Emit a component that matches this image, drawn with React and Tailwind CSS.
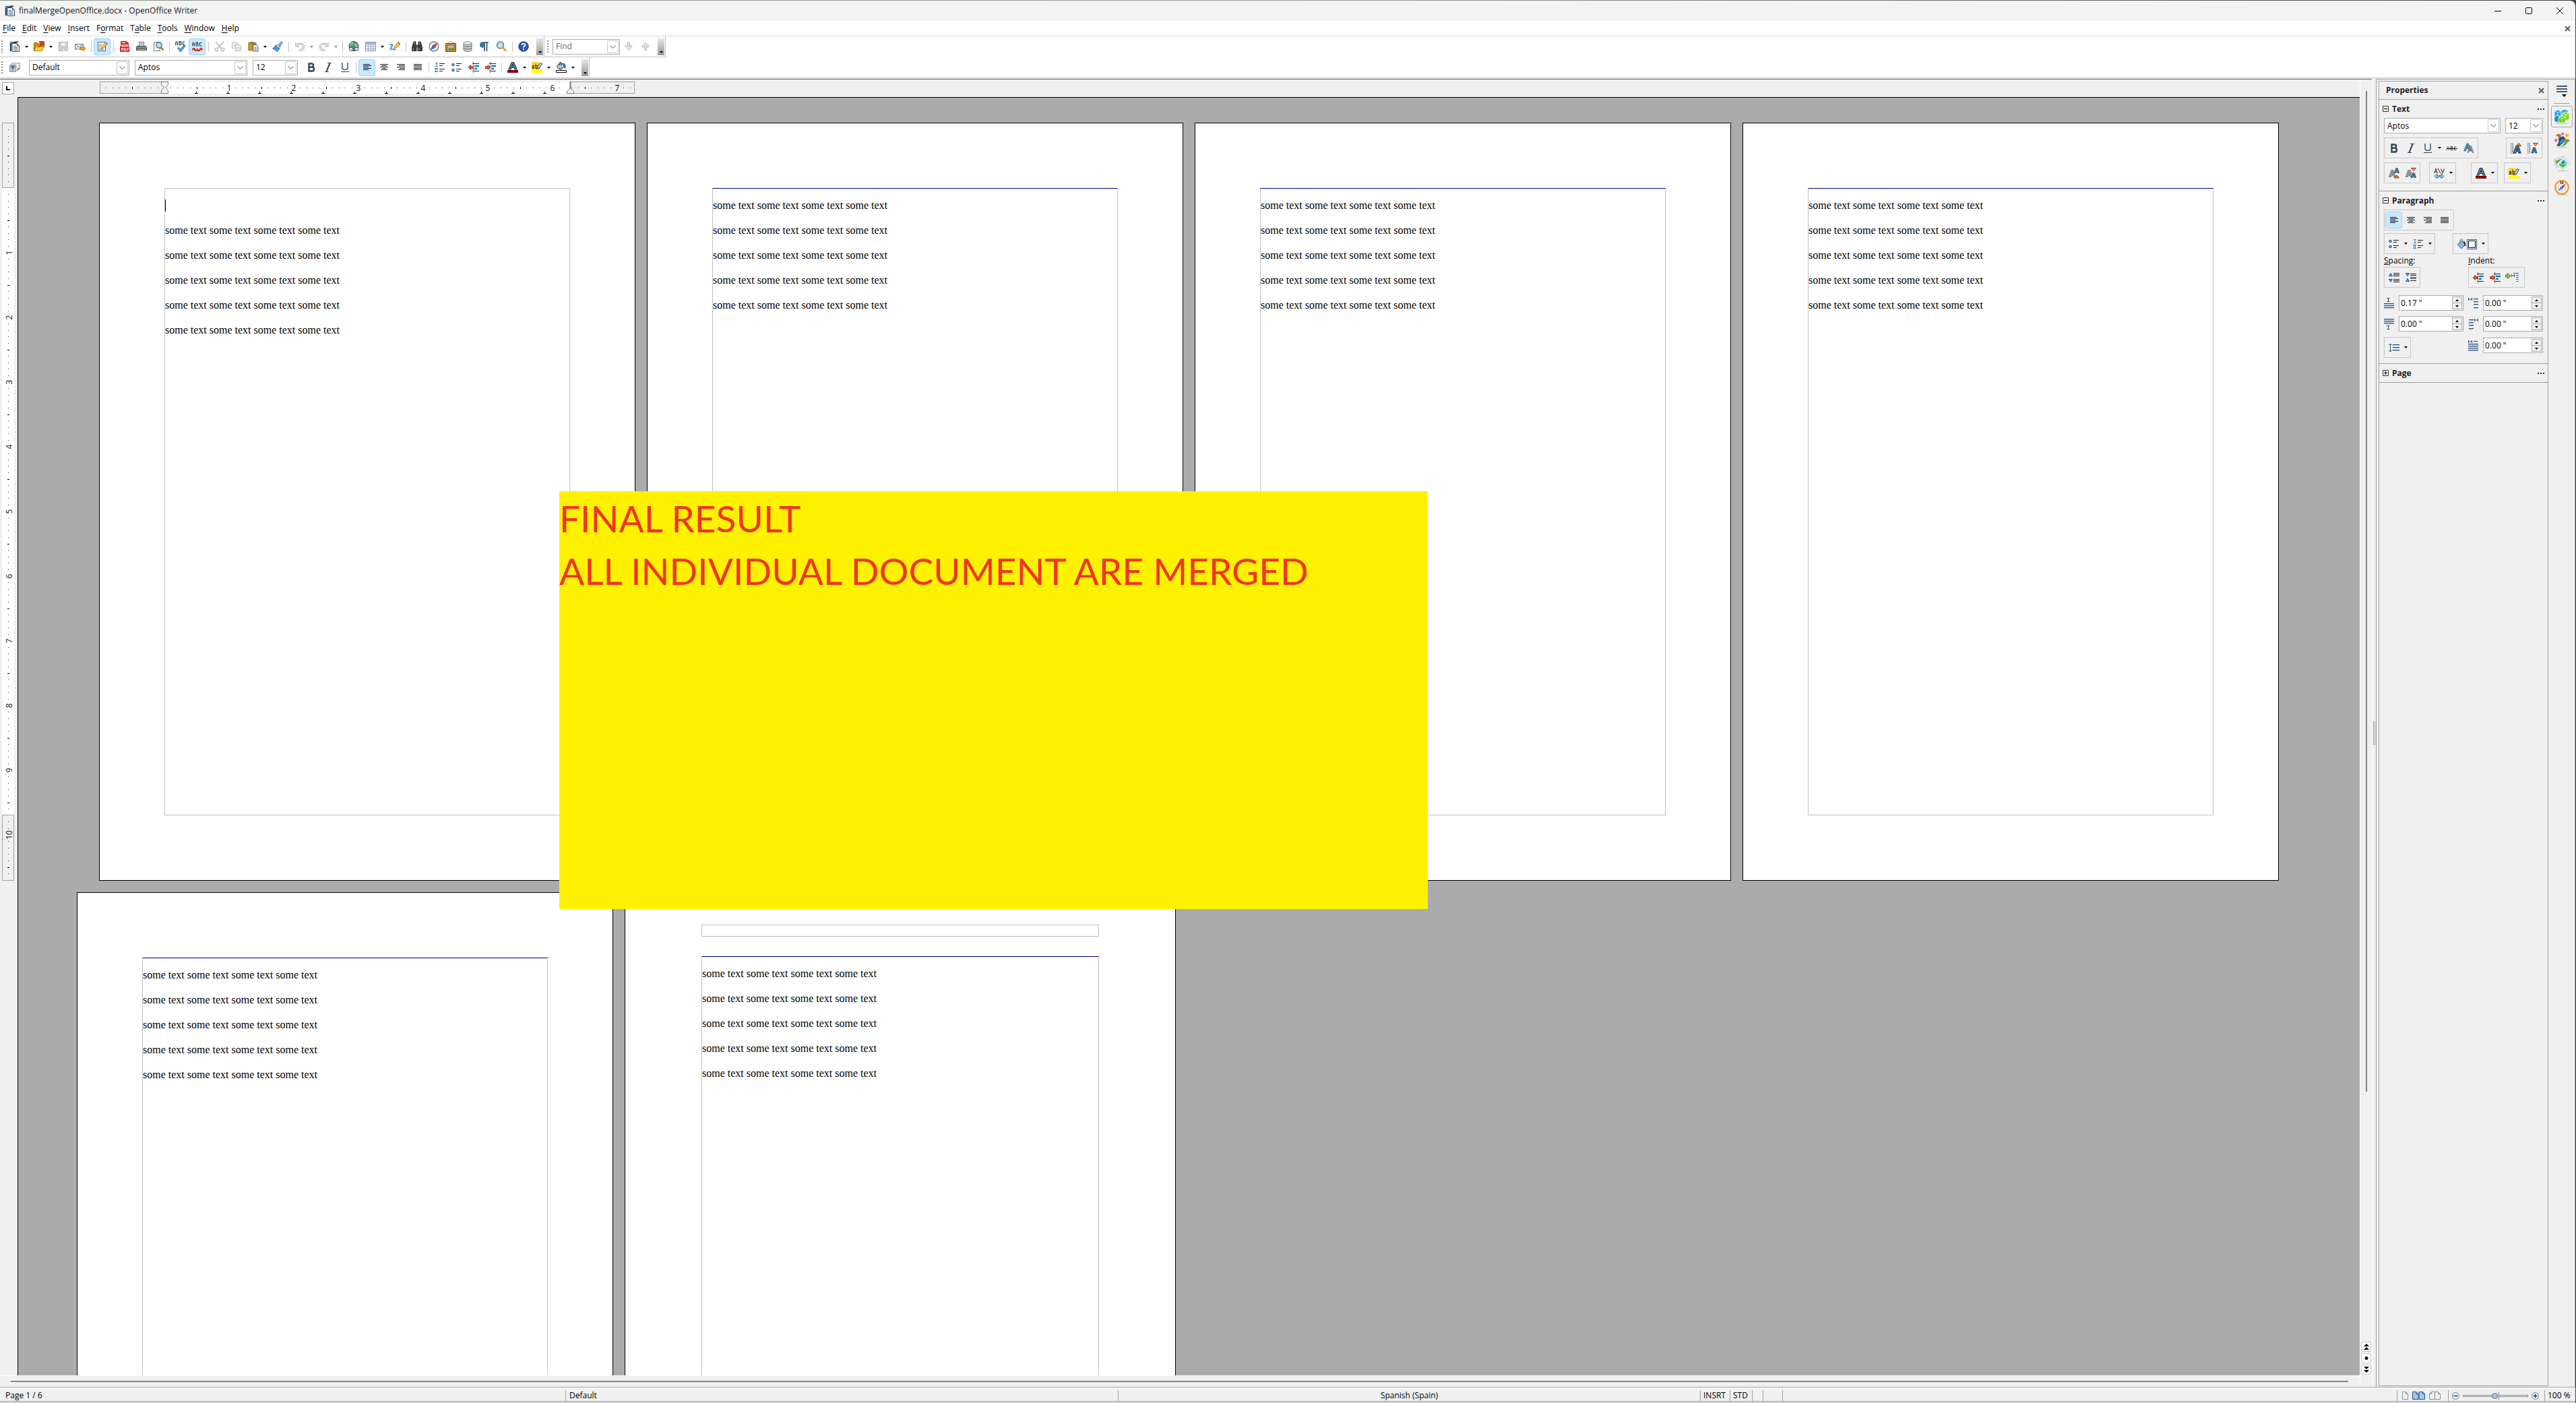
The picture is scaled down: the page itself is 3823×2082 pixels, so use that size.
import React from 'react';

/* ---------- icon drawings, 16 x 16 unless stated ---------- */

function Svg({ children, w = 16, h = 16 }) {
  return (
    <svg width={w} height={h} viewBox={`0 0 ${w} ${h}`} fill="none" aria-hidden="true" className="block shrink-0">
      {children}
    </svg>
  );
}

const WriterIcon = () => (
  <Svg>
    <path d="M4 3.500h7.500l3 3v9H4z" fill="#f4f8fa" stroke="#3a5263" />
    <path d="M6 7.500h4M6 9.500h6.500M6 11.500h6.500M6 13.500h6.500" stroke="#54748a" />
    <path d="M0 1.500c3-.5 4-1 6 0C8 .2 11 0 15 1 12 1.500 10.500 3 8.500 4 6.500 3 3 3 0 1.500z" fill="#2c4658" />
    <path d="M2 3v12" stroke="#2c4658" strokeWidth="2.500" />
    <path d="M11.500 4v3h3" stroke="#3a5263" />
  </Svg>
);

const OpenIcon = () => (
  <Svg>
    <path d="M.5 2.500h5l1.500 2h4v10H.5z" fill="#d98c0c" stroke="#a35f00" />
    <path d="M.8 14.500 3.500 8h12l-3 6.500z" fill="#ffd34d" stroke="#b87400" />
    <path d="M7.500 8.500 11 5 8.500 2.500V.5h7v7h-2L11.500 6 9 8.500z" fill="#d9441c" stroke="#8c2408" strokeWidth=".7" />
  </Svg>
);

const SaveIcon = () => (
  <Svg>
    <path d="M1.500 1.500h13v13h-13z" fill="#d2d2d2" stroke="#b4b4b4" />
    <path d="M4 2h8v6H4z" fill="#f2f2f2" stroke="#bdbdbd" />
    <path d="M5 10.500h6v4H5z" fill="#ececec" stroke="#b4b4b4" />
    <path d="M6.500 11.500v2" stroke="#aaa" />
  </Svg>
);

const MailIcon = () => (
  <Svg>
    <path d="M.5 4.500h12v7.500H.5z" fill="#eef2f5" stroke="#6f7f8b" />
    <path d="m.5 4.500 6 4.500 6-4.500M.5 12l4-4M12.500 12l-4-4" stroke="#6f7f8b" />
    <path d="M8 9.500h4V7l4 4-4 4v-2.500H8z" fill="#f5a623" stroke="#a35f00" strokeWidth=".8" />
  </Svg>
);

const EditIcon = () => (
  <Svg>
    <path d="M1.500 1.500h11v13h-11z" fill="#fafcfd" stroke="#4b6475" />
    <path d="M3 4.500h5M3 6.500h4M3 8.500h3M3 10.500h3M3 12.500h7" stroke="#7c98a9" />
    <path d="M6.500 11.500 7.500 8l5.500-6 2.500 2.500-6 6z" fill="#ffc93c" stroke="#8a5a10" strokeWidth=".8" />
    <path d="m12 3 1.500-1.500L16 4l-1.500 1.500z" fill="#e36a7c" />
    <path d="m6.500 11.500 1.300-.4-.9-.9z" fill="#222" />
  </Svg>
);

const PdfIcon = () => (
  <Svg>
    <path d="M2.500 .5h8l3 3v12h-11z" fill="#f4f8fa" stroke="#4b6475" />
    <path d="M2 0h9l3 3v2.500H2z" fill="#d33" />
    <path d="M4 2.500h5" stroke="#fff" />
    <path d="M4 6.500h8" stroke="#7c98a9" />
    <path d="M1 8h14v8H1z" fill="#e02020" />
    <path d="M3.500 14.500v-4h2v2h-2M7.500 10.500v4h1.500l.5-1v-2l-.5-1zM12 14.500v-4h2M12 12.500h1.500" stroke="#fff" />
  </Svg>
);

const PrintIcon = () => (
  <Svg>
    <path d="M4.500 1.500h7v6h-7z" fill="#f2f7fb" stroke="#4f6675" />
    <path d="M6 3.500h4M6 5.500h4" stroke="#88a" />
    <path d="M1.500 7.500h13l1 2v4H.5v-4z" fill="#8b959c" stroke="#2f3a42" />
    <path d="M2 10.500h12" stroke="#3f4a52" />
    <path d="M2.500 12.500h11" stroke="#7ec832" strokeWidth="1.500" />
  </Svg>
);

const PreviewIcon = () => (
  <Svg>
    <path d="M1.500 1.500h9v13h-9z" fill="#f6f8fa" stroke="#6f8290" />
    <circle cx="9" cy="6" r="4.200" fill="#b9dcf3" stroke="#3f6480" strokeWidth="1.200" />
    <path d="m12 9.500 3.500 4" stroke="#a6651b" strokeWidth="2.400" />
  </Svg>
);

const SpellIcon = () => (
  <Svg>
    <path d="M.5 6V2.500L2 .5l1.500 2V6M.5 4h3M6 5.500v-5h2.500v2H6h3v3zM14.500 1h-3v4.500h3" stroke="#35495a" strokeWidth="1.200" />
    <path d="m4 9.500 4 4.500 6.500-8" stroke="#1c5c94" strokeWidth="3" />
    <path d="m4 9.500 4 4.500 6.500-8" stroke="#6fb4ea" strokeWidth="1.200" />
  </Svg>
);

const AutoSpellIcon = () => (
  <Svg>
    <path d="M.5 7.500V4L2 2l1.500 2v3.500M.5 5.500h3M6 7V2h2.500v2H6h3v3zM14.500 2.500h-3V7h3" stroke="#35495a" strokeWidth="1.200" />
    <path d="M.5 13.500q2.500-5 4 0 2 1.500 3.500-1 1.500 2.500 3.500 1 1.500-5 4 0" stroke="#d8301c" strokeWidth="2.400" />
  </Svg>
);

const CutIcon = () => (
  <Svg>
    <path d="m2 1 9 10M14 1 5 11" stroke="#bdbdbd" strokeWidth="1.800" />
    <circle cx="3.500" cy="12.500" r="2.200" stroke="#bdbdbd" strokeWidth="1.400" />
    <circle cx="12.500" cy="12.500" r="2.200" stroke="#bdbdbd" strokeWidth="1.400" />
  </Svg>
);

const CopyIcon = () => (
  <Svg>
    <path d="M1.500 1.500h6l2 2v7h-8z" fill="#f3f3f3" stroke="#bdbdbd" />
    <path d="M6.500 5.500h6l2 2v7h-8z" fill="#f3f3f3" stroke="#b4b4b4" />
    <path d="M8 9.500h5M8 11.500h5M3 4.500h3M3 6.500h3" stroke="#c4c4c4" />
  </Svg>
);

const PasteIcon = () => (
  <Svg>
    <path d="M1 2.500h11v11H1z" fill="#d39a17" stroke="#8f5f05" />
    <path d="M4 1h5v3H4z" fill="#6b7780" />
    <path d="M7.500 5.500h5l2.500 2.500v7H7.500z" fill="#f1f6fa" stroke="#3f5b70" />
    <path d="M9 9.500h4M9 11.500h4M9 13h4" stroke="#6f8ea3" />
  </Svg>
);

const BrushIcon = () => (
  <Svg>
    <path d="m9.500 6 4-5.500 2 2-4 5.500z" fill="#9fc4e4" stroke="#3b6386" />
    <path d="M6.500 4.500 12 9l-1.500 2L5 6.500z" fill="#e9eef2" stroke="#4a6c88" strokeWidth=".8" />
    <path d="M5 6.500 10.500 11 7.500 15.500.5 10.500c2 0 3.500-2 4.500-4z" fill="#4d9fe4" stroke="#1c5c9a" />
  </Svg>
);

const UndoIcon = () => (
  <Svg>
    <path d="M1.500 2v6h6L5.500 6C8 4 12 5 12 8.500S9 12.500 7 12.500V15c4 0 8-2 8-6.500S8 1 3.800 4.200z" fill="#dcdcdc" stroke="#b8b8b8" strokeWidth=".8" />
  </Svg>
);

const RedoIcon = () => (
  <Svg>
    <path d="M14.500 2v6h-6l2-2C8 4 4 5 4 8.500S7 12.500 9 12.500V15c-4 0-8-2-8-6.500S8 1 12.200 4.200z" fill="#dcdcdc" stroke="#b8b8b8" strokeWidth=".8" />
  </Svg>
);

const LinkIcon = () => (
  <Svg>
    <circle cx="8" cy="7.500" r="7" fill="#4d86b8" stroke="#2b4b66" />
    <path d="M3 3c2-2 4-2 5-1.500L7 5 4 6.500 2 8zM9 3l4 1 1 4-3 1-2-3z" fill="#9ccc4a" />
    <rect x="1" y="9.500" width="7" height="4.500" rx="2.200" fill="#dfe6ea" stroke="#3a4c58" />
    <rect x="8" y="9.500" width="7" height="4.500" rx="2.200" fill="#dfe6ea" stroke="#3a4c58" />
    <path d="M5 11.700h6" stroke="#3a4c58" />
  </Svg>
);

const TableIcon = () => (
  <Svg>
    <path d="M.5 1.500h15v13H.5z" fill="#fff" stroke="#7f929f" />
    <path d="M1 2h14v2.500H1z" fill="#bcd0de" />
    <path d="M.5 4.500h15M.5 8h15M.5 11.500h15M4.500 2v12.500M8.500 2v12.500M12 2v12.500" stroke="#8ea1ae" />
  </Svg>
);

const DrawIcon = () => (
  <Svg>
    <path d="M.5 6c3-2.500 5-1 3 2s-4 4.500 0 4 4 1 6 1.500" stroke="#2b7cd3" strokeWidth="1.500" />
    <path d="m6.500 11 1-3.500L12.500 2 15.500 5 10 10z" fill="#ffc93c" stroke="#9a6a12" strokeWidth=".8" />
    <path d="m12 2.500 1.200-1.200L16 4l-1.200 1.200z" fill="#d93a3a" />
  </Svg>
);

const BinocularsIcon = () => (
  <Svg>
    <path d="M3 1h3v3l1 2v8.500H.5V9zM13 1h-3v3L9 6v8.500h6.500V9z" fill="#3b3f42" stroke="#151515" strokeWidth=".8" />
    <path d="M6.500 6h3v3.500h-3z" fill="#555" />
    <path d="M2 10v4M11 10v4M4 2v3M11.500 2v3" stroke="#9aa0a4" />
  </Svg>
);

const CompassIcon = () => (
  <Svg>
    <circle cx="8" cy="8" r="7" fill="#e9eff3" stroke="#6e7c86" strokeWidth="1.300" />
    <path d="M13.500 2.500 10 10 6 6z" fill="#e02a2a" />
    <path d="M2.500 13.500 6 6l4 4z" fill="#2a6fd0" />
  </Svg>
);

const GalleryIcon = () => (
  <Svg>
    <path d="m3 3 5-2.500L13 3" stroke="#a98f5b" />
    <path d="M.5 3.500h15v12H.5z" fill="#d98a3a" stroke="#7c3f0c" />
    <path d="M3 6h10v7H3z" fill="#8cc7ee" stroke="#7c3f0c" strokeWidth=".6" />
    <path d="M3.500 12.700 6.500 9.500l2.500 1.500L12.500 9v3.700z" fill="#53a02c" />
    <circle cx="5.500" cy="8" r="1" fill="#ffd43b" />
  </Svg>
);

const DatabaseIcon = () => (
  <Svg>
    <path d="M2 3v10.500c0 2.500 12 2.500 12 0V3z" fill="#c9cfd2" stroke="#75828a" />
    <ellipse cx="8" cy="3" rx="6" ry="2.200" fill="#f0f3f4" stroke="#75828a" />
    <path d="M2 6.500c0 2.500 12 2.500 12 0M2 10c0 2.500 12 2.500 12 0" stroke="#5c6a73" />
  </Svg>
);

const PilcrowIcon = () => (
  <Svg>
    <path d="M14 2H6.500C3.500 2 2 3.800 2 5.500S3.500 9 6.500 9M8 2.500V15M11.500 2.500V15" stroke="#1d4c72" strokeWidth="1.600" />
    <path d="M7 2.500v6C3 8.500 2.500 7 2.500 5.500s1-3 4.500-3z" fill="#2f7fb5" />
  </Svg>
);

const ZoomIcon = () => (
  <Svg>
    <circle cx="6.500" cy="6" r="5" fill="#c4e0f4" stroke="#5e7f96" strokeWidth="1.500" />
    <path d="m10 9.500 5 5" stroke="#d9a326" strokeWidth="2.800" />
  </Svg>
);

const HelpIcon = () => (
  <Svg>
    <circle cx="8" cy="8" r="7.200" fill="#2b57b0" stroke="#173672" />
    <path d="M5.500 6c0-3 5-3 5-.3C10.500 7.500 8 7.500 8 9.800M8 11v2" stroke="#fff" strokeWidth="1.800" />
  </Svg>
);

const ArrowV = ({ up }) => (
  <Svg w={12}>
    <path d={up ? 'M6 2 11.500 8 9.500 9.500 7.500 7.500v6h-3v-6l-2 2L.5 8z' : 'M6 13.500.5 7.500l2-1.500 2 2V2h3v6l2-2 2 1.500z'} fill="#e2e2e2" stroke="#b9b9b9" />
  </Svg>
);

const StylesIcon = () => (
  <Svg>
    <path d="M3.500 1.500h12v8l-3 3h-9z" fill="#dfe6ea" stroke="#93a4af" />
    <path d="M.5 4.500h9v10h-9z" fill="#c2ced6" stroke="#7a8c98" />
    <path d="M3 6h4v3H3zM5 9v4M3 7.500h4" stroke="#3e5261" />
    <path d="M12.500 12.500v-3h3" stroke="#5d7180" />
  </Svg>
);

const BoldIcon = () => (
  <Svg>
    <path d="M4.500 2.500h4c3.500 0 3.500 5 0 5h-4zM4.500 7.500h4.500c4 0 4 6 0 6H4.500z" stroke="#2f4657" strokeWidth="2.400" />
  </Svg>
);
const ItalicIcon = () => (
  <Svg>
    <path d="M7 1.500h6M3 14.500h6" stroke="#2f4657" strokeWidth="1.200" />
    <path d="M10.500 2 5.500 14" stroke="#2f4657" strokeWidth="2" />
  </Svg>
);
const UnderlineIcon = () => (
  <Svg>
    <path d="M4 1v7c0 4.500 8 4.500 8 0V1" stroke="#54718a" strokeWidth="1.800" />
    <path d="M2 14.500h12" stroke="#2f4657" />
  </Svg>
);

function AlignIcon({ kind }) {
  const rows = {
    left: ['M2 3.500h10', 'M2 5.500h12', 'M2 7.500h8', 'M2 9.500h12', 'M2 11.500h8'],
    center: ['M2 3.500h12', 'M4 5.500h8', 'M2 7.500h12', 'M5 9.500h6', 'M3 11.500h10'],
    right: ['M2 3.500h12', 'M5 5.500h9', 'M2 7.500h12', 'M6 9.500h8', 'M4 11.500h10'],
    justify: ['M2 3.500h12', 'M2 5.500h12', 'M2 7.500h12', 'M2 9.500h12', 'M2 11.500h12'],
  }[kind];
  return (
    <Svg>
      <path d={rows.join('')} stroke="#111d26" />
    </Svg>
  );
}

const NumberingIcon = () => (
  <Svg>
    <path d="M1 1.500h4M3 1.500v5M1 6.500h4M0 9.500h5M1.500 9.500v5M3.500 9.500v5M0 14.500h5" stroke="#4a7b9c" />
    <path d="M7 2.500h8M7 5.500h5M7 10.500h8M7 13.500h5" stroke="#111d26" />
  </Svg>
);
const BulletsIcon = () => (
  <Svg>
    <circle cx="2.500" cy="4" r="1.800" fill="#7fb6dc" stroke="#1b4a6b" />
    <circle cx="2.500" cy="12" r="1.800" fill="#7fb6dc" stroke="#1b4a6b" />
    <path d="M7 2.500h8M7 5.500h5M7 10.500h8M7 13.500h5" stroke="#111d26" />
  </Svg>
);

function IndentIcon({ inc }) {
  return (
    <Svg>
      <path d="M6 2.500h10M6 13.500h10" stroke="#1d2b36" />
      <path d="M7.500 0v16" stroke="#1d2b36" strokeDasharray="1.500 1" />
      <path d="M9 6h7M9 10h4" stroke="#1181c8" strokeWidth="2.400" />
      <path d={inc ? 'M8 8 4 4.500v2H.5v3H4v2z' : 'M0 8l3.500-3.500v2H7v3H3.500v2z'} fill="#e2572b" stroke="#8c2408" strokeWidth=".8" />
    </Svg>
  );
}

const FontColorIcon = () => (
  <Svg>
    <path d="M2 11 6.500.5h3L14 11h-3l-.8-2.500H5.800L5 11zM7 6h2L8 3.500z" fill="#5f87a3" stroke="#1f3c50" strokeWidth="1.200" />
    <path d="M0 12h16v4H0z" fill="#800000" />
  </Svg>
);
const HighlightIcon = () => (
  <Svg>
    <path d="M0 0h11v11H0z" fill="#ffd83a" />
    <path d="M.5 5.500h3v4H1v-2h2.500M6 2.500v7h2.500v-4H6" stroke="#222" />
    <path d="M8 8 13 1.500l2.500 1.500-4.500 7z" fill="#cfd6da" stroke="#55636c" strokeWidth="1.200" />
    <path d="m7 7.500 4 2.500-4.500 1.500z" fill="#9a5b16" />
    <path d="M0 12h16v4H0z" fill="#ffff00" />
  </Svg>
);
const BackgroundIcon = () => (
  <Svg>
    <path d="M2 5.500 7.500 1 13 6.500l-5.500 5L2 8.500z" fill="#9aabb6" stroke="#2c3c47" />
    <path d="M3 7.500 11 5" stroke="#e8eef2" strokeWidth="1.500" />
    <path d="M5 5V1.500c0-1.500 3-1.500 3 0V6" stroke="#2c3c47" />
    <path d="M9.500 1.500c5.500 0 5.500 4 5 9l-2.500-2z" fill="#2b7ab0" />
    <path d="M.5 12.500h15v3H.5z" fill="#fff" stroke="#000" />
  </Svg>
);

const StrikeIcon = () => (
  <Svg>
    <path d="M.5 11V7.500L2 5.500l1.500 2V11M6 10.500v-5h2.500v2H6h3v3zM14.500 6h-3v4.500h3" stroke="#444" />
    <path d="M0 8.500h16" stroke="#222" />
  </Svg>
);
const ShadowIcon = () => (
  <Svg>
    <path d="M5 15 9.500 4h2.500L16 15h-3l-1-2.500H9L8 15z" fill="#9b9b9b" />
    <path d="M.5 12 5 1h2.500L12 12H9L8 9H4.500l-1 3zM5.500 6.500h1.600L6.300 4z" fill="#5b8db0" stroke="#2e5a7a" strokeWidth=".7" />
  </Svg>
);

const BigA = ({ x, y, s = 1, grey }) => (
  <path
    transform={`translate(${x} ${y}) scale(${s})`}
    d="M0 10 3.500 0h3L10 10H7.200L6.600 8H3.400l-.6 2zM4 5.800h2L5 3z"
    fill={grey ? '#9aa1a6' : '#5f93b8'}
    stroke={grey ? '#7d858a' : '#1f3c50'}
    strokeWidth="1.200"
  />
);
const RedUp = ({ x, y }) => <path d={`M${x} ${y + 4}l3.500-4 3.500 4z`} fill="#f08a4a" stroke="#a0250a" />;
const RedDown = ({ x, y }) => <path d={`M${x} ${y}l3.500 4 3.500-4z`} fill="#f4b08a" stroke="#a0250a" />;

function SizeIcon({ grow }) {
  return (
    <Svg>
      <path d="M.5 .5h3v15h-3z" fill="#dbe6ee" stroke="#8aa1b1" />
      <path d="M2 3.500h1.500M2 6.500h1.500M2 9.500h1.500M2 12.500h1.500" stroke="#4f6b7e" />
      {grow ? <BigA x={4.500} y={4.500} s={1.050} /> : <BigA x={6} y={7} s={0.800} />}
      {grow ? <RedUp x={8.500} y={0.500} /> : <RedDown x={8.500} y={0.500} />}
    </Svg>
  );
}
function ScriptIcon({ sup }) {
  return (
    <Svg>
      <BigA x={0.500} y={3.500} s={1} grey />
      {sup ? <BigA x={8.500} y={0.500} s={0.700} /> : <BigA x={8.500} y={7.500} s={0.700} />}
      {sup ? <RedUp x={8.500} y={11} /> : <RedDown x={8.500} y={0.500} />}
    </Svg>
  );
}
const KerningIcon = () => (
  <Svg>
    <path d="M.5 8 3 1.500 5.500 8M1.500 6h3M10.500 1.500 13 8l2.500-6.500" stroke="#5b6870" strokeWidth="1.500" />
    <path d="m6 .5 4 8" stroke="#d62222" strokeWidth="1.300" />
    <path d="m1 12.500 4-3.500v2.500h6V9l4 3.500-4 3.500v-2.500H5V16z" fill="#9fd0f0" stroke="#1f5f94" strokeWidth=".9" />
  </Svg>
);

const FillIcon = () => (
  <Svg w={30}>
    <path d="m1 9 6-6 6 6-6 6z" fill="#8fb9de" stroke="#456a8c" />
    <path d="M5 8V3c0-3 4-3 4 0v3" stroke="#5c7488" />
    <path d="M10 4c3 0 3.500 3 3 8l-2-3z" fill="#1f2c36" />
    <path d="M15.500 1.500h14v14h-14z" fill="#fff" stroke="#2d4f80" />
    <path d="M17.500 3.500h10v10h-10z" stroke="#000" />
  </Svg>
);

function SpacingIcon({ inc }) {
  return (
    <Svg>
      <path d={inc ? 'M.5 5.500h5L3 1.500zM.5 10.500h5L3 14.500z' : 'M.5 1.500h5L3 5.500zM.5 13.500h5L3 9.500z'} fill="#6eb4e4" stroke="#174c74" />
      <path d={inc ? 'M7 1.500h9M7 3.500h9M7 5.500h9M7 10.500h9M7 12.500h9M7 14.500h9' : 'M7 2.500h9M7 4.500h9M7 7.500h9M7 9.500h9M7 12.500h9'} stroke="#1d2b36" />
    </Svg>
  );
}
const HangingIcon = () => (
  <Svg w={20}>
    <path d="M.5 4h3V1.500L8 5.500 3.500 9.500V7h-3z" fill="#7fd045" stroke="#2d7a10" strokeWidth=".9" />
    <path d="M9.500 3v4M13.500 3v4M9.500 5h4" stroke="#2d4f80" />
    <path d="M12 1.500h8M16 4.500h4M16 7.500h4M16 10.500h4M16 13.500h4" stroke="#3f5f8c" />
    <path d="M19.500 2v12" stroke="#b9c6d8" />
  </Svg>
);

const blueBars = (ys, x = 0, w = 15) => (
  <>
    {ys.map((y) => (
      <g key={y}>
        <rect x={x} y={y} width={w} height="1" fill="#274b80" />
        <rect x={x} y={y + 1} width={w} height="1" fill="#a9bad2" />
      </g>
    ))}
  </>
);
const AboveIcon = () => (
  <Svg w={15}>
    <path d="M4.500 .5h4M6.500 .5v5M4.500 5.500h4" stroke="#274b80" />
    {blueBars([8, 11, 14])}
  </Svg>
);
const BelowIcon = () => (
  <Svg w={15}>
    {blueBars([0, 3, 6])}
    <path d="M4.500 10.500h4M6.500 10.500v5M4.500 15.500h4" stroke="#274b80" />
  </Svg>
);
const BeforeIcon = () => (
  <Svg w={15}>
    <path d="M.5 0v4M5.500 0v4M.5 2h5" stroke="#274b80" />
    {blueBars([1, 5, 9, 14], 8, 7)}
  </Svg>
);
const AfterIcon = () => (
  <Svg w={15}>
    <path d="M9.500 0v4M14.500 0v4M9.500 2h5" stroke="#274b80" />
    {blueBars([1, 5, 9, 14], 1, 7)}
  </Svg>
);
const FirstLineIcon = () => (
  <Svg w={15}>
    <path d="M.5 0v4M5.500 0v4M.5 2h5M8 1.500h6" stroke="#274b80" />
    {blueBars([5, 8, 11, 14])}
  </Svg>
);
const LineSpacingIcon = () => (
  <Svg>
    <path d="M2.500 2v12M0 4.500 2.500 2 5 4.500M0 11.500 2.500 14 5 11.500" stroke="#274b80" />
    {blueBars([3, 7, 11], 6, 10)}
  </Svg>
);

/* sidebar deck tabs, 24 x 24 */
const PropertiesDeck = () => (
  <Svg w={24} h={24}>
    <ellipse cx="12" cy="22" rx="9" ry="1.500" fill="#d0d0d0" />
    <path d="m1 4 5-2 5 2v7l-5 2-5-2z" fill="#1ea0f0" stroke="#e8f6ff" strokeWidth=".8" />
    <path d="m1 12 5-2 5 2v7l-5 2-5-2z" fill="#1487dc" stroke="#e8f6ff" strokeWidth=".8" />
    <path d="m11 3 5-2 5 2v7l-5 2-5-2z" fill="#35a8ec" stroke="#e8f6ff" strokeWidth=".8" />
    <path d="m13 7 5-2 5 2v9l-5 2-5-2z" fill="#7ddc1a" stroke="#f0ffe0" strokeWidth=".8" />
    <path d="m7 13 5-2 5 2v7l-5 2-5-2z" fill="#66cf10" stroke="#f0ffe0" strokeWidth=".8" />
    <path d="m7 13 5 2 5-2M12 15v7M1 4l5 2 5-2M6 6v6M13 7l5 2 5-2M18 9v4" stroke="#f0ffe0" strokeWidth=".8" />
  </Svg>
);
const StylesDeck = () => (
  <Svg w={24} h={24}>
    <ellipse cx="12" cy="22.500" rx="9" ry="1.200" fill="#d0d0d0" />
    <path d="M3 6c1-4 6-4 8-1l-1 3H7L6 6z" fill="#d9641c" />
    <path d="M7 9l7-3c3 2 3 6 1 9l-7 6-4-1c3-3 4-6 3-11z" fill="#1d4f78" />
    <path d="M9 14l5-5 1 4-7 6z" fill="#3f8fc4" />
    <path d="M8 20c4 1 7-1 8-5 1-3 0-6-1-8 5 3 7 7 4 11-2 3-8 4-11 2z" fill="#58b53c" />
    <path d="m3.500 9 1 2 2 .5L5 13l.3 2-1.800-1-1.800 1 .3-2L.5 11.500l2-.5z" fill="#e35ac2" />
    <path d="m13 0 1 1.500 1.800.3-1.300 1.300.3 1.800L13 4l-1.600.9.3-1.800L10.500 1.800 12.200 1.500z" fill="#b25ae0" />
    <path d="m19.500 1 1.200 2.300 2.500.4-1.800 1.800.4 2.500-2.300-1.200L17.200 8l.4-2.500-1.800-1.800 2.500-.4z" fill="#f4b62c" />
    <path d="m21 10 .9 1.600 1.700.3-1.200 1.200.3 1.800-1.700-.9-1.600.9.3-1.800-1.200-1.200 1.700-.3z" fill="#e3403a" />
  </Svg>
);
const GalleryDeck = () => (
  <Svg w={24} h={24}>
    <ellipse cx="13" cy="22.500" rx="8" ry="1.200" fill="#d0d0d0" />
    <path d="m0 6 14-5 3 10-13 7z" fill="#f5f5f5" stroke="#9aa4a8" strokeDasharray="2 1" />
    <path d="M2 7.500 12.500 4l1 6-9 4.500z" fill="#6fae52" />
    <path d="m15 2 9 9-11 9-9-7z" fill="#fff" stroke="#9aa4a8" strokeDasharray="2 1" />
    <path d="m15 4.500 6.500 6.500-8.500 7-6-5z" fill="#8fd0f5" />
    <path d="m7 13 4-1 3 1.500 3-1 1.500 1.500-5.500 4z" fill="#5cb838" />
    <path d="m14 7 3 3-3 2.500-3-2z" fill="#2d7ab8" />
  </Svg>
);
const NavigatorDeck = () => (
  <Svg w={24} h={24}>
    <ellipse cx="12" cy="23" rx="8" ry="1" fill="#d0d0d0" />
    <circle cx="12" cy="12" r="9.800" fill="#eef1f3" stroke="#ee9a1c" strokeWidth="2.200" />
    <circle cx="12" cy="12" r="5.500" stroke="#c3cace" />
    <path d="M18 6.500 13.500 14l-3-3z" fill="#e0352c" />
    <path d="M6 17.500 10.500 11l3 3z" fill="#2f86d8" />
    <path d="M10.500 7V3l3 4V3" stroke="#333" />
  </Svg>
);

/* ---------- controls ---------- */

const Btn = ({ label, active, wide, children }) => (
  <button
    type="button"
    aria-label={label}
    className={
      'flex h-[25px] shrink-0 items-center justify-center rounded-[3px] border ' +
      (wide ? 'w-[38px] ' : 'w-[25px] ') +
      (active ? 'border-[#99d1ff] bg-[#cce8ff]' : 'border-transparent')
    }
  >
    {children}
  </button>
);

const Drop = ({ label, off }) => (
  <button type="button" aria-label={label} className="flex h-[25px] w-[11px] shrink-0 items-center justify-center">
    <svg width="5" height="3" viewBox="0 0 5 3" aria-hidden="true">
      <path d="M0 0h5L2.500 3z" fill={off ? '#8c8c8c' : '#000'} />
    </svg>
  </button>
);

const Sep = () => (
  <div className="flex w-2 shrink-0 justify-center">
    <div className="h-[15px] w-px bg-[#c3c3c3]" />
  </div>
);

const Grip = () => (
  <div className="flex w-[6px] shrink-0 flex-col items-center gap-[2px]">
    {Array.from({ length: 5 }, (_, i) => (
      <div key={i} className="size-[2px] bg-[#8f8f8f]" />
    ))}
  </div>
);

const Overflow = ({ label }) => (
  <button
    type="button"
    aria-label={label}
    className="flex h-[25px] w-[10px] shrink-0 items-end justify-center bg-linear-to-b from-[#e6e6e6] to-[#9a9a9a] pb-[3px]"
  >
    <svg width="5" height="3" viewBox="0 0 5 3" aria-hidden="true">
      <path d="M0 0h5L2.500 3z" fill="#000" />
    </svg>
  </button>
);

const Chevron = () => (
  <span className="pointer-events-none absolute top-px right-px bottom-px flex w-[17px] items-center justify-center rounded-[2px] border border-[#c8c8c8] bg-[#fdfdfd]">
    <svg width="9" height="5" viewBox="0 0 9 5" fill="none" aria-hidden="true">
      <path d="M.5.5l4 4 4-4" stroke="#555" />
    </svg>
  </span>
);

const Combo = ({ label, value, options = [], width }) => (
  <div className={'relative h-[23px] shrink-0 border border-[#ababab] bg-white ' + width}>
    <select aria-label={label} defaultValue={value} className="block h-full w-full appearance-none bg-transparent pl-1 text-xs text-black outline-none">
      {[value, ...options].map((o) => (
        <option key={o}>{o}</option>
      ))}
    </select>
    <Chevron />
  </div>
);

const Spin = ({ label, value, width }) => (
  <div className={'flex h-[23px] shrink-0 border border-[#ababab] bg-white ' + width}>
    <input aria-label={label} defaultValue={value} className="w-0 min-w-0 flex-1 bg-transparent pl-[2px] text-xs text-black outline-none" />
    <div className="m-px flex w-[15px] flex-col border border-[#ababab] bg-[#f0f0f0]">
      <button type="button" aria-label={label + ' up'} className="flex flex-1 items-center justify-center border-b border-[#ababab]">
        <svg width="5" height="3" viewBox="0 0 5 3" aria-hidden="true"><path d="M0 3h5L2.500 0z" fill="#000" /></svg>
      </button>
      <button type="button" aria-label={label + ' down'} className="flex flex-1 items-center justify-center">
        <svg width="5" height="3" viewBox="0 0 5 3" aria-hidden="true"><path d="M0 0h5L2.500 3z" fill="#000" /></svg>
      </button>
    </div>
  </div>
);

/* ---------- header ---------- */

const MENUS = [
  ['', 'F', 'ile'], ['', 'E', 'dit'], ['', 'V', 'iew'], ['', 'I', 'nsert'], ['F', 'o', 'rmat'],
  ['T', 'a', 'ble'], ['', 'T', 'ools'], ['', 'W', 'indow'], ['', 'H', 'elp'],
];

const SmallX = () => (
  <svg width="9" height="9" viewBox="0 0 9 9" fill="none" aria-hidden="true">
    <path d="M1 1l7 7M8 1 1 8" stroke="#55606a" strokeWidth="2" />
  </svg>
);

function TitleBar() {
  return (
    <header className="flex h-[30px] items-center rounded-tr-lg bg-[#f3f3f3] pl-[7px]">
      <WriterIcon />
      <h1 className="ml-[5px] flex-1 text-xs text-[#1a1a1a]">finalMergeOpenOffice.docx - OpenOffice Writer</h1>
      <button type="button" aria-label="Minimize" className="flex h-full w-[46px] items-center justify-center">
        <svg width="10" height="10" viewBox="0 0 10 10" aria-hidden="true"><path d="M0 5h10v1H0z" fill="#000" /></svg>
      </button>
      <button type="button" aria-label="Maximize" className="flex h-full w-[46px] items-center justify-center">
        <svg width="10" height="10" viewBox="0 0 10 10" fill="none" aria-hidden="true"><rect x=".5" y=".5" width="9" height="9" rx="1" stroke="#000" /></svg>
      </button>
      <button type="button" aria-label="Close" className="flex h-full w-[46px] items-center justify-center">
        <svg width="10" height="10" viewBox="0 0 10 10" fill="none" aria-hidden="true"><path d="M0 0l10 10M10 0 0 10" stroke="#000" /></svg>
      </button>
    </header>
  );
}

function MenuBar() {
  return (
    <nav className="flex h-[23px] items-center gap-[10px] border-b border-[#dcdcdc] bg-white pr-[7px] pl-1">
      {MENUS.map(([a, u, b]) => (
        <button key={a + u + b} type="button" className="text-xs text-black">
          {a}
          <span className="underline underline-offset-2">{u}</span>
          {b}
        </button>
      ))}
      <button type="button" aria-label="Close document" className="ml-auto"><SmallX /></button>
    </nav>
  );
}

function StandardBar() {
  return (
    <div className="flex h-[31px] w-fit border-b border-[#c0c0c0]">
      <div className="flex items-center border-r border-[#c0c0c0]">
        <Grip />
        <div className="w-[3px]" />
        <Btn label="New"><WriterIcon /></Btn><Drop label="New options" />
        <Btn label="Open"><OpenIcon /></Btn><Drop label="Recent documents" />
        <Btn label="Save"><SaveIcon /></Btn>
        <Btn label="Document as e-mail"><MailIcon /></Btn>
        <Sep />
        <Btn label="Edit file" active><EditIcon /></Btn>
        <Sep />
        <Btn label="Export as PDF"><PdfIcon /></Btn>
        <Btn label="Print"><PrintIcon /></Btn>
        <Btn label="Page preview"><PreviewIcon /></Btn>
        <Sep />
        <Btn label="Spelling and grammar"><SpellIcon /></Btn>
        <Btn label="AutoSpellcheck" active><AutoSpellIcon /></Btn>
        <Sep />
        <Btn label="Cut"><CutIcon /></Btn>
        <Btn label="Copy"><CopyIcon /></Btn>
        <Btn label="Paste"><PasteIcon /></Btn><Drop label="Paste options" />
        <Btn label="Format paintbrush"><BrushIcon /></Btn>
        <Sep />
        <Btn label="Undo"><UndoIcon /></Btn><Drop label="Undo list" off />
        <Btn label="Redo"><RedoIcon /></Btn><Drop label="Redo list" off />
        <Sep />
        <Btn label="Hyperlink"><LinkIcon /></Btn>
        <Btn label="Table"><TableIcon /></Btn><Drop label="Table size" />
        <Btn label="Show draw functions"><DrawIcon /></Btn>
        <Sep />
        <Btn label="Find and replace"><BinocularsIcon /></Btn>
        <Btn label="Navigator"><CompassIcon /></Btn>
        <Btn label="Gallery"><GalleryIcon /></Btn>
        <Btn label="Data sources"><DatabaseIcon /></Btn>
        <Btn label="Nonprinting characters"><PilcrowIcon /></Btn>
        <Btn label="Zoom"><ZoomIcon /></Btn>
        <Sep />
        <Btn label="Help"><HelpIcon /></Btn>
        <div className="w-[7px]" />
        <Overflow label="More standard tools" />
        <div className="w-px" />
      </div>
      <div className="flex items-center border-r border-[#c0c0c0] pl-[2px]">
        <Grip />
        <div className="relative ml-1 flex h-[23px] w-[100px] border border-[#ababab] bg-white">
          <input aria-label="Find" placeholder="Find" className="w-full bg-transparent pl-1 text-xs outline-none placeholder:text-[#6d6d6d]" />
          <Chevron />
        </div>
        <Btn label="Find next"><ArrowV /></Btn>
        <Btn label="Find previous"><ArrowV up /></Btn>
        <div className="w-[6px]" />
        <Overflow label="More find tools" />
        <div className="w-px" />
      </div>
    </div>
  );
}

function FormatBar() {
  return (
    <div className="flex h-[30px] w-fit items-center border-r border-[#c0c0c0]">
      <Grip />
      <div className="w-[3px]" />
      <Btn label="Styles and formatting"><StylesIcon /></Btn>
      <div className="ml-[9px] flex gap-2">
        <Combo label="Apply style" value="Default" options={['Heading 1']} width="w-[149px]" />
        <Combo label="Font name" value="Aptos" options={['Arial']} width="w-[167px]" />
        <Combo label="Font size" value="12" options={['14']} width="w-[67px]" />
      </div>
      <div className="w-[7px]" />
      <Btn label="Bold"><BoldIcon /></Btn>
      <Btn label="Italic"><ItalicIcon /></Btn>
      <Btn label="Underline"><UnderlineIcon /></Btn>
      <Sep />
      <Btn label="Align left" active><AlignIcon kind="left" /></Btn>
      <Btn label="Centered"><AlignIcon kind="center" /></Btn>
      <Btn label="Align right"><AlignIcon kind="right" /></Btn>
      <Btn label="Justified"><AlignIcon kind="justify" /></Btn>
      <Sep />
      <Btn label="Numbering"><NumberingIcon /></Btn>
      <Btn label="Bullets"><BulletsIcon /></Btn>
      <Btn label="Decrease indent"><IndentIcon /></Btn>
      <Btn label="Increase indent"><IndentIcon inc /></Btn>
      <Sep />
      <Btn label="Font color"><FontColorIcon /></Btn><Drop label="Font colors" />
      <Btn label="Highlighting"><HighlightIcon /></Btn><Drop label="Highlight colors" />
      <Btn label="Background color"><BackgroundIcon /></Btn><Drop label="Background colors" />
      <div className="w-[7px]" />
      <Overflow label="More formatting tools" />
      <div className="w-px" />
    </div>
  );
}

/* ---------- rulers ---------- */

const TENTHS = Array.from({ length: 84 }, (_, i) => i - 9);

function HorizontalRuler() {
  return (
    <div className="flex h-[26px] shrink-0 items-center bg-[#f0f0f0] pl-[3px]">
      <button type="button" aria-label="Tab type" className="flex size-[18px] items-center justify-center border border-[#a0a0a0] bg-white">
        <svg width="8" height="8" viewBox="0 0 8 8" aria-hidden="true"><path d="M1 1h2v4h4v2H1z" fill="#000" /></svg>
      </button>
      <svg width="798" height="22" viewBox="0 0 798 22" className="ml-[126px] block font-['Open_Sans',sans-serif]" role="img" aria-label="Horizontal ruler">
        <rect x="98" y="2" width="601" height="17" fill="#fff" />
        <rect x="1.500" y="1.500" width="96" height="17" fill="#f0f0f0" stroke="#a0a0a0" />
        <rect x="699.500" y="1.500" width="95" height="17" fill="#f0f0f0" stroke="#a0a0a0" />
        {TENTHS.map((t) => {
          const x = Math.round(96.500 + t * 9.600);
          if (t === 0 || t === 62 || x > 790) return null;
          if (t % 10 === 0) {
            return (
              <text key={t} x={x} y="15" fontSize="12" textAnchor="middle" fill="#111">{t / 10}</text>
            );
          }
          return Math.abs(t % 10) === 5
            ? <rect key={t} x={x} y="9" width="1" height="3" fill="#000" />
            : <rect key={t} x={x} y="10" width="1" height="1" fill="#333" />;
        })}
        {Array.from({ length: 12 }, (_, i) => (
          <path key={i} d={`M${142 + i * 47} 18.500h5M${144.5 + i * 47} 16v3`} stroke="#000" />
        ))}
        <path d="M92.500 1.500h10v4l-4 4.500 4 4.500v4h-10v-4l4-4.500-4-4.500z" fill="#f7f7f7" stroke="#777" />
        <path d="M699.500 1v11" stroke="#777" strokeWidth="2" />
        <path d="M694.500 18.500v-3l5-4.500 5 4.500v3z" fill="#f7f7f7" stroke="#777" />
      </svg>
    </div>
  );
}

function VerticalRuler() {
  return (
    <div className="w-[26px] shrink-0 bg-[#f0f0f0] pt-[38px] pl-[2px]">
      <svg width="20" height="1127" viewBox="0 0 20 1127" className="block font-['Open_Sans',sans-serif]" role="img" aria-label="Vertical ruler">
        <rect x="1" y="97" width="18" height="931" fill="#fff" />
        <rect x="1.500" y=".5" width="17" height="96" fill="#f0f0f0" stroke="#a0a0a0" />
        <rect x="1.500" y="1027.500" width="17" height="97" fill="#f0f0f0" stroke="#a0a0a0" />
        {Array.from({ length: 116 }, (_, i) => i - 9).map((t) => {
          const y = Math.round(96.500 + t * 9.600);
          if (t === 0 || t === 97) return null;
          if (t % 10 === 0) {
            return (
              <text key={t} transform={`translate(16 ${y}) rotate(-90)`} fontSize="12" textAnchor="middle" fill="#111">{t / 10}</text>
            );
          }
          return Math.abs(t % 10) === 5
            ? <rect key={t} x="9" y={y} width="3" height="1" fill="#000" />
            : <rect key={t} x="10" y={y} width="1" height="1" fill="#333" />;
        })}
      </svg>
    </div>
  );
}

/* ---------- document ---------- */

const LINE = 'some text some text some text some text';

const Lines = ({ caret }) => (
  <div className="flex flex-col gap-[19px] pt-4 font-['Liberation_Serif',serif] text-base leading-[18px] text-black">
    {caret && <div className="h-[18px] w-px bg-black" />}
    {Array.from({ length: 5 }, (_, i) => (
      <p key={i} className="whitespace-nowrap">{LINE}</p>
    ))}
  </div>
);

const Page = ({ first }) => (
  <article className="h-[1125px] w-[796px] shrink-0 border border-black bg-white p-24">
    <div className={'h-full border border-[#c0c0c0] ' + (first ? '' : 'border-t-[#000080]')}>
      <Lines caret={first} />
    </div>
  </article>
);

const HeaderPage = () => (
  <article className="flex h-[1125px] w-[818px] shrink-0 flex-col gap-[29px] border border-black bg-white px-[113px] pt-[47px] pb-24">
    <div className="h-[18px] shrink-0 border border-[#c0c0c0]" />
    <div className="flex-1 border border-[#c0c0c0] border-t-[#000080]">
      <Lines />
    </div>
  </article>
);

function Canvas() {
  return (
    <main className="relative flex min-w-0 flex-1 flex-col gap-[17px] overflow-hidden border-t border-l border-black bg-[#ababab] pt-[37px]">
      <div className="flex justify-center gap-[17px]">
        <Page first />
        <Page />
        <Page />
        <Page />
      </div>
      <div className="flex gap-[17px] pl-[87px]">
        <Page />
        <HeaderPage />
      </div>
      <aside className="absolute top-[584px] left-[803px] h-[620px] w-[1289px] bg-[#fff200] pt-px font-['Lato',sans-serif] text-[55px] leading-[78px] text-[#f03522]">
        <p>FINAL RESULT</p>
        <p>ALL INDIVIDUAL DOCUMENT ARE MERGED</p>
      </aside>
    </main>
  );
}

const NAV = [
  ['Previous page', 'M0 4h8L4 0zM0 9h8L4 5z'],
  ['Navigation', 'M4 2a2.500 2.500 0 1 0 .01 0z'],
  ['Next page', 'M0 0h8L4 4zM0 5h8L4 9z'],
];

function VerticalScroll() {
  return (
    <div className="flex w-[18px] shrink-0 flex-col items-center border-l border-white bg-[#f0f0f0] pt-[17px] pb-[18px]">
      <div className="flex min-h-0 flex-1 justify-center">
        <div className="h-[80%] w-[2px] bg-[#868686]" />
      </div>
      <div className="flex flex-col gap-[2px]">
        {NAV.map(([label, d]) => (
          <button key={label} type="button" aria-label={label} className="flex size-[15px] items-center justify-center rounded-[3px] border border-[#c8c8c8] bg-white">
            <svg width="8" height="9" viewBox="0 0 8 9" aria-hidden="true"><path d={d} fill="#000" /></svg>
          </button>
        ))}
      </div>
    </div>
  );
}

/* ---------- sidebar ---------- */

const Box = ({ children, className = '' }) => (
  <div className={'flex h-[31px] w-fit shrink-0 items-center border border-[#c8c8c8] px-px ' + className}>{children}</div>
);

const SectionHead = ({ title, closed }) => (
  <div className="flex h-[27px] items-center pr-[5px] pl-[5px]">
    <button type="button" aria-label={(closed ? 'Expand ' : 'Collapse ') + title}>
      <svg width="9" height="9" viewBox="0 0 9 9" fill="none" aria-hidden="true" className="block">
        <path d="M.5.5h8v8h-8z" stroke="#333" />
        <path d={closed ? 'M2 4.500h5M4.500 2v5' : 'M2 4.500h5'} stroke="#000" />
      </svg>
    </button>
    <h3 className="ml-[5px] flex-1 text-xs font-bold text-[#222]">{title}</h3>
    <button type="button" aria-label={title + ' options'}>
      <svg width="10" height="2" viewBox="0 0 10 2" aria-hidden="true"><path d="M0 0h2v2H0zM4 0h2v2H4zM8 0h2v2H8z" fill="#222" /></svg>
    </button>
  </div>
);

function Sidebar() {
  return (
    <aside className="flex shrink-0 border-t border-r border-l border-[#a0a0a0] bg-[#f0f0f0] pt-[2px] pl-[3px]">
      <section className="mb-px w-[252px] border border-[#a0a0a0]">
        <div className="flex h-[27px] items-center border-b border-[#a0a0a0] pr-[5px] pl-[10px]">
          <h2 className="flex-1 text-xs font-bold text-[#222]">Properties</h2>
          <button type="button" aria-label="Close sidebar"><SmallX /></button>
        </div>

        <div className="h-[136px] border-b border-[#a0a0a0]">
          <SectionHead title="Text" />
          <div className="flex flex-col gap-[6px] pl-[7px]">
            <div className="flex gap-[7px]">
              <Combo label="Sidebar font name" value="Aptos" width="w-[173px]" />
              <Combo label="Sidebar font size" value="12" width="w-[56px]" />
            </div>
            <div className="flex w-[235px] items-center justify-between">
              <Box>
                <Btn label="Sidebar bold"><BoldIcon /></Btn>
                <Btn label="Sidebar italic"><ItalicIcon /></Btn>
                <Btn label="Sidebar underline"><UnderlineIcon /></Btn><Drop label="Underline styles" />
                <Btn label="Strikethrough"><StrikeIcon /></Btn>
                <Btn label="Shadow"><ShadowIcon /></Btn>
              </Box>
              <Box>
                <Btn label="Increase font"><SizeIcon grow /></Btn>
                <Btn label="Reduce font"><SizeIcon /></Btn>
              </Box>
            </div>
            <div className="flex">
              <Box>
                <Btn label="Superscript"><ScriptIcon sup /></Btn>
                <Btn label="Subscript"><ScriptIcon /></Btn>
              </Box>
              <Box className="ml-[13px]"><Btn label="Character spacing"><KerningIcon /></Btn><Drop label="Spacing presets" /></Box>
              <Box className="ml-[22px]"><Btn label="Sidebar font color"><FontColorIcon /></Btn><Drop label="Sidebar font colors" /></Box>
              <Box className="ml-[9px]"><Btn label="Sidebar highlighting"><HighlightIcon /></Btn><Drop label="Sidebar highlight colors" /></Box>
            </div>
          </div>
        </div>

        <div className="h-[256px] border-b border-[#a0a0a0]">
          <SectionHead title="Paragraph" />
          <div className="flex flex-col pl-[7px]">
            <Box>
              <Btn label="Sidebar align left" active><AlignIcon kind="left" /></Btn>
              <Btn label="Sidebar centered"><AlignIcon kind="center" /></Btn>
              <Btn label="Sidebar align right"><AlignIcon kind="right" /></Btn>
              <Btn label="Sidebar justified"><AlignIcon kind="justify" /></Btn>
            </Box>
            <div className="mt-1 flex gap-[26px]">
              <Box>
                <Btn label="Sidebar bullets"><BulletsIcon /></Btn><Drop label="Bullet styles" />
                <Btn label="Sidebar numbering"><NumberingIcon /></Btn><Drop label="Numbering styles" />
              </Box>
              <Box><Btn label="Paragraph background" wide><FillIcon /></Btn><Drop label="Paragraph background colors" /></Box>
            </div>
            <div className="grid grid-cols-[125px_1fr]">
              <div className="flex h-[19px] items-center text-xs text-black"><span><span className="underline">S</span>pacing:</span></div>
              <div className="flex h-[19px] items-center text-xs text-black"><span><span className="underline">I</span>ndent:</span></div>
              <Box>
                <Btn label="Increase spacing"><SpacingIcon inc /></Btn>
                <Btn label="Decrease spacing"><SpacingIcon /></Btn>
              </Box>
              <Box>
                <Btn label="Sidebar decrease indent"><IndentIcon /></Btn>
                <Btn label="Sidebar increase indent"><IndentIcon inc /></Btn>
                <Btn label="Hanging indent"><HangingIcon /></Btn>
                <div className="w-[5px]" />
              </Box>
            </div>
            <div className="mt-[11px] grid grid-cols-[125px_1fr] gap-y-2">
              <div className="flex items-center gap-[7px]"><AboveIcon /><Spin label="Spacing above" value={'0.17 "'} width="w-[96px]" /></div>
              <div className="flex items-center gap-[7px]"><BeforeIcon /><Spin label="Indent before" value={'0.00 "'} width="w-[89px]" /></div>
              <div className="flex items-center gap-[7px]"><BelowIcon /><Spin label="Spacing below" value={'0.00 "'} width="w-[96px]" /></div>
              <div className="flex items-center gap-[7px]"><AfterIcon /><Spin label="Indent after" value={'0.00 "'} width="w-[89px]" /></div>
              <Box><Btn label="Line spacing"><LineSpacingIcon /></Btn><Drop label="Line spacing presets" /></Box>
              <div className="flex h-[25px] items-center gap-[7px]"><FirstLineIcon /><Spin label="First line indent" value={'0.00 "'} width="w-[89px]" /></div>
            </div>
          </div>
        </div>

        <div className="border-b border-[#a0a0a0]">
          <SectionHead title="Page" closed />
        </div>
      </section>

      <nav className="flex w-[39px] flex-col items-center pt-[7px]" aria-label="Sidebar decks">
        <button type="button" aria-label="Sidebar settings">
          <svg width="16" height="17" viewBox="0 0 16 17" aria-hidden="true" className="block">
            <path d="M0 0h16v2H0zM0 4h16v2H0zM0 8h16v2H0z" fill="#4a5866" />
            <path d="M8 13h7l-3.500 4z" fill="#000" />
          </svg>
        </button>
        <div className="mt-[9px] h-px w-[23px] bg-[#a0a0a0]" />
        <div className="mt-[3px] flex flex-col gap-[3px]">
          <button type="button" aria-label="Properties deck" className="flex size-8 items-center justify-center rounded-[3px] border border-[#a8a8a8]"><PropertiesDeck /></button>
          <button type="button" aria-label="Styles deck" className="flex size-8 items-center justify-center"><StylesDeck /></button>
          <button type="button" aria-label="Gallery deck" className="flex size-8 items-center justify-center"><GalleryDeck /></button>
          <button type="button" aria-label="Navigator deck" className="flex size-8 items-center justify-center"><NavigatorDeck /></button>
        </div>
      </nav>
    </aside>
  );
}

/* ---------- status bar ---------- */

const PageView = ({ w, d, on }) => (
  <svg width={w} height="12" viewBox={`0 0 ${w} 12`} aria-hidden="true">
    <path d={d} fill={on ? '#a9c4ee' : '#eef1f3'} stroke={on ? '#1c5288' : '#7f929f'} />
  </svg>
);

function StatusBar() {
  return (
    <footer className="flex h-5 items-stretch border-t border-white bg-[#f0f0f0] pt-[3px] text-xs text-black *:flex *:items-center">
      <div className="w-[839px] pl-2">Page 1 / 6</div>
      <div className="w-[820px] border-l border-[#a0a0a0] pl-[5px]">Default</div>
      <div className="w-[864px] justify-center border-l border-[#a0a0a0]">Spanish (Spain)</div>
      <div className="w-[44px] border-l border-[#a0a0a0] pl-1">INSRT</div>
      <div className="w-[33px] border-l border-[#a0a0a0] pl-1">STD</div>
      <div className="w-4 border-l border-[#a0a0a0]" />
      <div className="w-[29px] border-l border-[#a0a0a0]" />
      <div className="flex-1 border-l border-[#a0a0a0]" />
      <div className="w-[76px] gap-[6px] border-l border-[#a0a0a0] pl-[7px]">
        <button type="button" aria-label="Single page view"><PageView w={9} d="M.5.5h5l3 3v8h-8zM5.500.5v3h3" /></button>
        <button type="button" aria-label="Multiple pages view"><PageView w={19} on d="M.5.5h5.500l3 3v8H.5zM6 .5v3h3M10 .5h5.500l3 3v8H10zM15.500.5v3h3" /></button>
        <button type="button" aria-label="Book view"><PageView w={17} d="M8.500.5h-5l-3 3v8h8zM8.500.5h5l3 3v8h-8zM3.500.5v3h-3M13.500.5v3h3" /></button>
      </div>
      <div className="w-[143px] gap-[5px] border-l border-[#a0a0a0] pl-[5px]">
        <button type="button" aria-label="Zoom out">
          <svg width="11" height="11" viewBox="0 0 11 11" fill="none" aria-hidden="true"><circle cx="5.500" cy="5.500" r="5" fill="#eef6fc" stroke="#6a7d8a" /><path d="M2.500 5.500h6" stroke="#123c63" strokeWidth="1.500" /></svg>
        </button>
        <div className="relative flex w-[97px] items-center">
          <div className="absolute left-[53px] h-[11px] w-px bg-[#868686]" />
          <input
            type="range"
            aria-label="Zoom"
            min="0"
            max="100"
            defaultValue="49"
            className="relative h-[3px] w-full appearance-none border border-[#868686] bg-[#f8f8f8] [&::-webkit-slider-thumb]:size-[9px] [&::-webkit-slider-thumb]:appearance-none [&::-webkit-slider-thumb]:rounded-full [&::-webkit-slider-thumb]:border [&::-webkit-slider-thumb]:border-[#5d6f8c] [&::-webkit-slider-thumb]:bg-[#a8c0f0]"
          />
        </div>
        <button type="button" aria-label="Zoom in">
          <svg width="11" height="11" viewBox="0 0 11 11" fill="none" aria-hidden="true"><circle cx="5.500" cy="5.500" r="5" fill="#eef6fc" stroke="#6a7d8a" /><path d="M2.500 5.500h6M5.500 2.500v6" stroke="#123c63" strokeWidth="1.500" /></svg>
        </button>
      </div>
      <div className="w-[46px] border-l border-[#a0a0a0] pl-1 whitespace-nowrap">100 %</div>
    </footer>
  );
}

export default function App() {
  return (
    <div className="flex h-screen flex-col bg-linear-to-r from-[#8c988a] via-[#9a9a9a] to-[#444444] pt-px pr-px font-['Open_Sans',sans-serif]">
      <TitleBar />
      <MenuBar />
      <div className="border-b border-[#c8c8c8] bg-white">
        <StandardBar />
        <FormatBar />
      </div>
      <div className="flex min-h-0 flex-1 bg-[#f0f0f0] pt-px">
        <div className="flex min-w-0 flex-1 border-t border-[#696969]">
          <div className="flex min-w-0 flex-1 flex-col">
            <HorizontalRuler />
            <div className="flex min-h-0 flex-1">
              <VerticalRuler />
              <Canvas />
            </div>
            <div className="flex h-[17px] shrink-0 items-center border-t border-white pr-[17px] pl-4">
              <div className="h-[2px] flex-1 bg-[#868686]" />
            </div>
          </div>
          <VerticalScroll />
        </div>
        <div className="flex w-[6px] shrink-0 items-center justify-center border-l border-white">
          <div className="h-[34px] w-[3px] border border-[#a0a0a0] bg-white" />
        </div>
        <Sidebar />
      </div>
      <div className="h-px bg-[#a0a0a0]" />
      <StatusBar />
      <div className="h-[3px] border-t border-[#a8a8a8] bg-[#d6d8d6]" />
    </div>
  );
}
